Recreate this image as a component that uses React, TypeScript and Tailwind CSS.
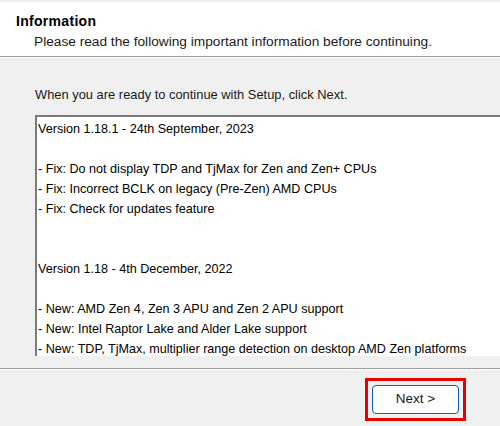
import React from "react";

const lines: string[] = [
  "Version 1.18.1 - 24th September, 2023",
  "",
  "- Fix: Do not display TDP and TjMax for Zen and Zen+ CPUs",
  "- Fix: Incorrect BCLK on legacy (Pre-Zen) AMD CPUs",
  "- Fix: Check for updates feature",
  "",
  "",
  "Version 1.18 - 4th December, 2022",
  "",
  "- New: AMD Zen 4, Zen 3 APU and Zen 2 APU support",
  "- New: Intel Raptor Lake and Alder Lake support",
  "- New: TDP, TjMax, multiplier range detection on desktop AMD Zen platforms",
];

export default function App() {
  return (
    <div
      className="w-[500px] h-[426px] overflow-hidden flex flex-col bg-[#f0f0f0] text-[13px] text-black"
      style={{ fontFamily: '"Liberation Sans", Arial, sans-serif' }}
    >
      <div className="h-[2px] bg-[#f0f0f0]" />
      <div className="h-[54px] bg-white flex flex-col pl-[16px] pt-[11px]">
        <div className="font-bold text-[14px] leading-[16px] tracking-[0.3px]">Information</div>
        <div className="pl-[18px] leading-[17px] mt-[4px] text-[13.7px] text-[#1a1a1a]">
          Please read the following important information before continuing.
        </div>
      </div>
      <div className="h-[1px] bg-[#a0a0a0]" />
      <div className="h-[1px] bg-white" />
      <div className="h-[310px] flex flex-col pl-[35px] pt-[29px]">
        <div className="leading-[16px] text-[#1a1a1a] text-[12.9px]">
          When you are ready to continue with Setup, click Next.
        </div>
        <div className="mt-[12px] w-[480px] h-[241px] bg-white border-l-2 border-t-2 border-[#7a7a7a] overflow-hidden pl-[1px] pt-[2px] text-[12.6px]">
          {lines.map((l, i) => (
            <div key={i} className="h-[20px] leading-[20px] whitespace-nowrap">
              {l || "\u00a0"}
            </div>
          ))}
        </div>
      </div>
      <div className="h-[1px] bg-[#a0a0a0]" />
      <div className="h-[1px] bg-white" />
      <div className="flex-1 flex justify-end pr-[34px] pt-[8px]">
        <div className="w-[101px] h-[43px] border-[3px] border-[#e60000] flex items-center justify-center">
          <div className="w-[87px] h-[29px] rounded-[4px] border border-[#0067c0] bg-[#fdfdfd] flex items-center justify-center text-[13.5px] text-[#1a1a1a]">
            Next &gt;
          </div>
        </div>
      </div>
    </div>
  );
}
